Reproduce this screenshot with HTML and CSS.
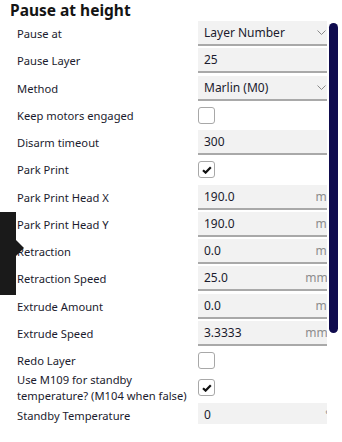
FILE: index.html
```html
<!DOCTYPE html>
<html>
<head>
<meta charset="utf-8">
<link rel="stylesheet" href="styles.css">
</head>
<body>
<div class="panel">
  <div class="content">
    <h1 class="title">Pause at height</h1>
    <div class="rows">
      <div class="row"><span class="label">Pause at</span><div class="field"><span class="val">Layer Number</span><svg class="chev" width="9" height="5" viewBox="0 0 9 5"><path d="M0.5 0.5 L4.5 4.5 L8.5 0.5" fill="none" stroke="#8a8a8a" stroke-width="1"/></svg></div></div>
      <div class="row"><span class="label">Pause Layer</span><div class="field"><span class="val">25</span></div></div>
      <div class="row"><span class="label">Method</span><div class="field"><span class="val">Marlin (M0)</span><svg class="chev" width="9" height="5" viewBox="0 0 9 5"><path d="M0.5 0.5 L4.5 4.5 L8.5 0.5" fill="none" stroke="#8a8a8a" stroke-width="1"/></svg></div></div>
      <div class="row"><span class="label">Keep motors engaged</span><div class="cbwrap"><span class="cb"></span></div></div>
      <div class="row"><span class="label">Disarm timeout</span><div class="field"><span class="val">300</span></div></div>
      <div class="row"><span class="label">Park Print</span><div class="cbwrap"><span class="cb"><svg width="10" height="8" viewBox="0 0 10 8"><path d="M1 4.2 L3.6 6.6 L8.8 1.2" fill="none" stroke="#111" stroke-width="2.2"/></svg></span></div></div>
      <div class="row"><span class="label">Park Print Head X</span><div class="field"><span class="val">190.0</span><span class="unit">mm</span></div></div>
      <div class="row"><span class="label">Park Print Head Y</span><div class="field"><span class="val">190.0</span><span class="unit">mm</span></div></div>
      <div class="row"><span class="label">Retraction</span><div class="field"><span class="val">0.0</span><span class="unit">mm</span></div></div>
      <div class="row"><span class="label">Retraction Speed</span><div class="field"><span class="val">25.0</span><span class="unit">mm/s</span></div></div>
      <div class="row"><span class="label">Extrude Amount</span><div class="field"><span class="val">0.0</span><span class="unit">mm</span></div></div>
      <div class="row"><span class="label">Extrude Speed</span><div class="field"><span class="val">3.3333</span><span class="unit">mm/s</span></div></div>
      <div class="row"><span class="label">Redo Layer</span><div class="cbwrap"><span class="cb"></span></div></div>
      <div class="row"><span class="label two">Use M109 for standby<br>temperature? (M104 when false)</span><div class="cbwrap"><span class="cb"><svg width="10" height="8" viewBox="0 0 10 8"><path d="M1 4.2 L3.6 6.6 L8.8 1.2" fill="none" stroke="#111" stroke-width="2.2"/></svg></span></div></div>
      <div class="row"><span class="label">Standby Temperature</span><div class="field"><span class="val">0</span><span class="unit">°C</span></div></div>
    </div>
  </div>
  <div class="track"><div class="thumb"></div></div>
  <div class="tip"></div>
</div>
</body>
</html>
```
FILE: styles.css
```css
html, body {
  margin: 0;
  padding: 0;
  background: #fff;
}
body {
  font-family: "Noto Sans", "Open Sans", sans-serif;
  color: #1b1b2e;
}
.panel {
  position: relative;
  display: flex;
  height: 424px;
  width: 342px;
  overflow: hidden;
}
.content {
  width: 327px;
  flex: none;
  overflow: hidden;
}
.title {
  margin: 0;
  padding-left: 10px;
  font-size: 15.5px;
  font-weight: 700;
  line-height: 21px;
  height: 21px;
  color: #141414;
}
.rows {
  padding-left: 17px;
}
.row {
  display: grid;
  grid-template-columns: 181px 141px;
  height: 27.25px;
  align-items: start;
}
.label {
  font-size: 11.2px;
  line-height: 25px;
  white-space: nowrap;
}
.label.two {
  line-height: 16px;
  margin-top: -3.5px;
}
.field {
  box-sizing: border-box;
  height: 25px;
  background: #f2f2f2;
  border-bottom: 2px solid #a9a9a9;
  display: flex;
  align-items: center;
  padding: 0 1px 0 6px;
  font-size: 12px;
}
.val {
  flex: 1;
  color: #1b1b2e;
}
.unit {
  color: #8c8c8c;
}
.chev {
  margin-right: 12px;
  display: block;
}
.cbwrap {
  height: 25px;
  display: flex;
  align-items: center;
}
.cb {
  box-sizing: border-box;
  width: 17px;
  height: 17px;
  border: 1px solid #a8a8a8;
  border-radius: 3px;
  background: #fff;
  display: flex;
  align-items: center;
  justify-content: center;
}
.cb svg {
  display: block;
}
.track {
  width: 15px;
  flex: none;
  background: #fff;
}
.thumb {
  margin-top: 23px;
  margin-left: 2px;
  width: 9px;
  height: 310px;
  border-radius: 5px;
  background: #0f0b4e;
}
.tip {
  position: absolute;
  left: 0;
  top: 212px;
  width: 16px;
  height: 83px;
  background: #1a1a1a;
}
.tip::after {
  content: "";
  position: absolute;
  left: 16px;
  top: 28px;
  border-left: 8px solid #1a1a1a;
  border-top: 8px solid transparent;
  border-bottom: 8px solid transparent;
}
```
